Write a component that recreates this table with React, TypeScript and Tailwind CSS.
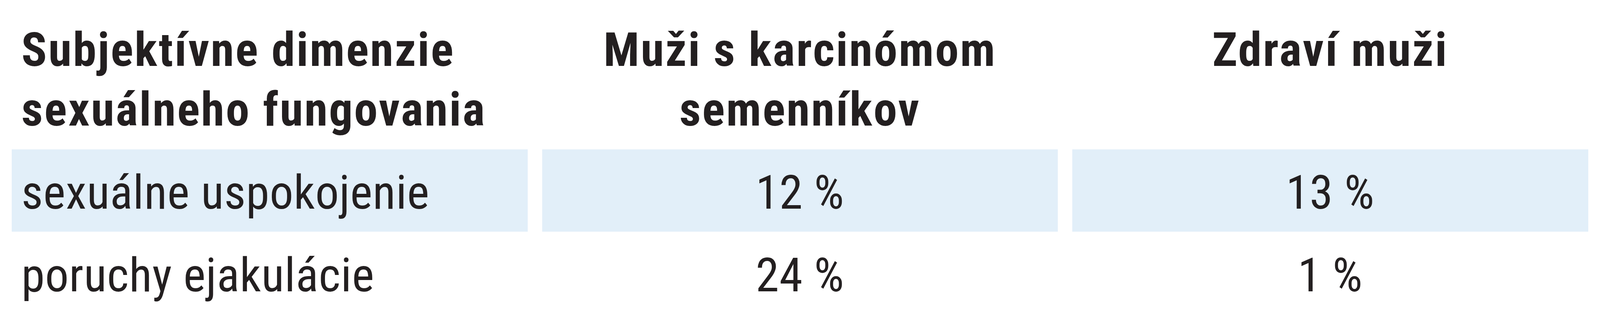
export default function App() {
  const rows = [
    ["sexuálne uspokojenie", "12 %", "13 %"],
    ["poruchy ejakulácie", "24 %", "1 %"],
  ];
  return (
    <div className="w-full h-[800px] overflow-hidden bg-white px-[0.74vw] font-['Roboto',sans-serif] font-stretch-condensed tracking-[0.8px] text-[#231f20] text-[121px] leading-[153px]">
      <div className="grid grid-cols-3 gap-x-[0.9vw] gap-y-[1px]">
        <div className="pt-[52px] pb-[24px] pl-[0.6vw] font-bold tracking-[3.5px]">
          <div>Subjektívne dimenzie</div>
          <div>sexuálneho fungovania</div>
        </div>
        <div className="pt-[52px] pb-[24px] text-center font-bold tracking-[3.5px]">
          <div>Muži s karcinómom</div>
          <div>semenníkov</div>
        </div>
        <div className="pt-[52px] pb-[24px] text-center font-bold tracking-[3.5px]">
          <div>Zdraví muži</div>
        </div>
        {rows.map((r, i) => (
          <div key={i} className="contents">
            <div className={`h-[211px] pt-[12px] flex items-center pl-[0.6vw] ${i % 2 === 0 ? "bg-[#e2eff9]" : ""}`}>{r[0]}</div>
            <div className={`h-[211px] pt-[12px] flex items-center justify-center ${i % 2 === 0 ? "bg-[#e2eff9]" : ""}`}>{r[1]}</div>
            <div className={`h-[211px] pt-[12px] flex items-center justify-center ${i % 2 === 0 ? "bg-[#e2eff9]" : ""}`}>{r[2]}</div>
          </div>
        ))}
      </div>
    </div>
  );
}
